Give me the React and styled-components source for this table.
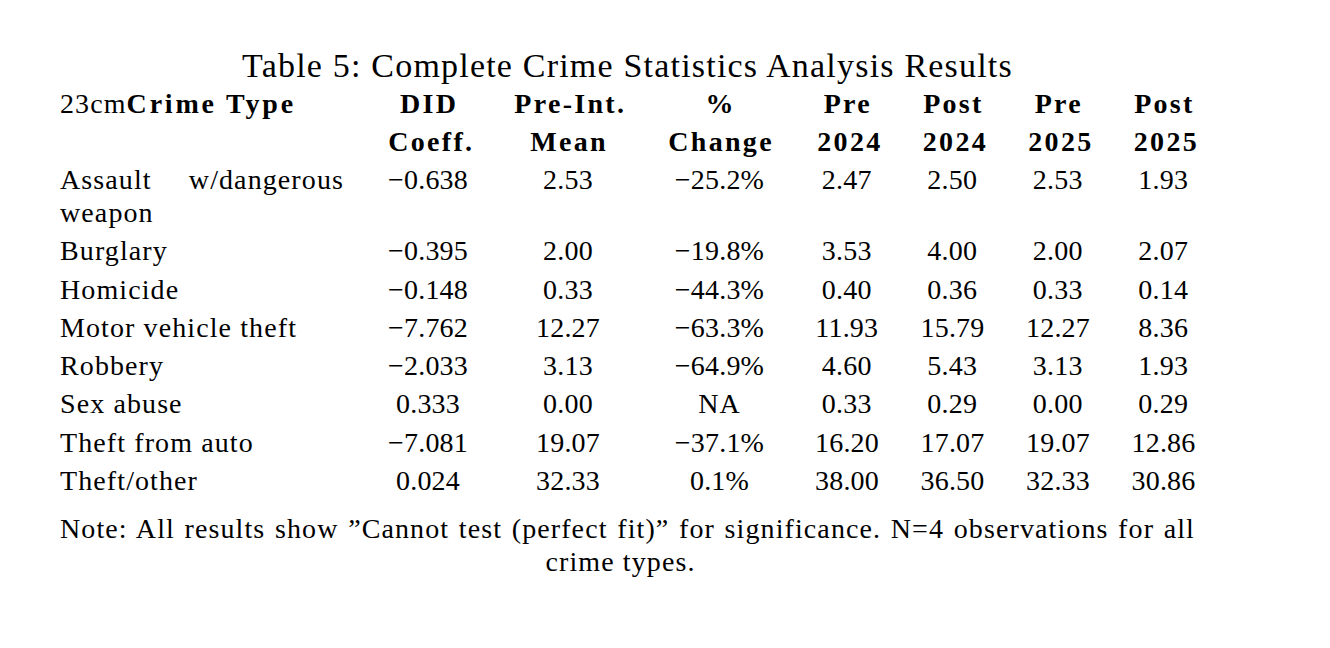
import React from "react";
import styled, { createGlobalStyle } from "styled-components";

const GlobalStyle = createGlobalStyle`
  html, body {
    margin: 0;
    padding: 0;
    background: #ffffff;
  }
  body {
    font-family: "Liberation Serif", "Times New Roman", serif;
    color: #000000;
  }
`;

const Page = styled.div`
  width: 1330px;
  height: 648px;
  box-sizing: border-box;
  padding: 47px 0 0 60px;
  background: #ffffff;
`;

const TableBlock = styled.div`
  width: 1135px;
  display: flex;
  flex-direction: column;
`;

const Caption = styled.div`
  font-size: 34px;
  line-height: 38px;
  letter-spacing: 1.2px;
  text-align: center;
  white-space: nowrap;
`;

const Grid = styled.div`
  display: grid;
  grid-template-columns: 284px 84px 112px 107px repeat(4, 63.5px);
  column-gap: 42px;
  font-size: 28px;
`;

const Row = styled.div`
  display: contents;
`;

const Cell = styled.div`
  padding: 2.9px 0;
  line-height: 32.5px;
  white-space: ${(p) => (p.$wrap ? "normal" : "nowrap")};
  text-align: ${(p) => p.$align || "center"};
  font-weight: ${(p) => (p.$bold ? 700 : 400)};
  letter-spacing: ${(p) => (p.$bold ? "2.3px" : p.$text ? "1.1px" : "0.2px")};
  ${(p) => (p.$bold ? "padding-left: 2.3px;" : "")}
`;

const Bold = styled.span`
  font-weight: 700;
  letter-spacing: 2.8px;
`;

const Note = styled.div`
  margin-top: 12px;
  font-size: 28px;
  line-height: 33px;
  letter-spacing: 1.1px;
`;

const NoteFull = styled.div`
  white-space: nowrap;
  text-align: justify;
  text-align-last: justify;
`;

const NoteCentered = styled.div`
  text-align: center;
  padding-right: 14px;
`;

const headTop = ["DID", "Pre-Int.", "%", "Pre", "Post", "Pre", "Post"];
const headBottom = ["Coeff.", "Mean", "Change", "2024", "2024", "2025", "2025"];

const rows = [
  ["Assault w/dangerous weapon", "−0.638", "2.53", "−25.2%", "2.47", "2.50", "2.53", "1.93"],
  ["Burglary", "−0.395", "2.00", "−19.8%", "3.53", "4.00", "2.00", "2.07"],
  ["Homicide", "−0.148", "0.33", "−44.3%", "0.40", "0.36", "0.33", "0.14"],
  ["Motor vehicle theft", "−7.762", "12.27", "−63.3%", "11.93", "15.79", "12.27", "8.36"],
  ["Robbery", "−2.033", "3.13", "−64.9%", "4.60", "5.43", "3.13", "1.93"],
  ["Sex abuse", "0.333", "0.00", "NA", "0.33", "0.29", "0.00", "0.29"],
  ["Theft from auto", "−7.081", "19.07", "−37.1%", "16.20", "17.07", "19.07", "12.86"],
  ["Theft/other", "0.024", "32.33", "0.1%", "38.00", "36.50", "32.33", "30.86"],
];

export default function App() {
  return (
    <>
      <GlobalStyle />
      <Page>
        <TableBlock>
          <Caption>Table 5: Complete Crime Statistics Analysis Results</Caption>
          <Grid>
            <Row>
              <Cell $align="left" $text>
                23cm<Bold>Crime Type</Bold>
              </Cell>
              {headTop.map((h, i) => (
                <Cell key={i} $bold>
                  {h}
                </Cell>
              ))}
            </Row>
            <Row>
              <Cell $align="left" />
              {headBottom.map((h, i) => (
                <Cell key={i} $bold>
                  {h}
                </Cell>
              ))}
            </Row>
            {rows.map((r) => (
              <Row key={r[0]}>
                <Cell $align="justify" $text $wrap>
                  {r[0]}
                </Cell>
                {r.slice(1).map((v, i) => (
                  <Cell key={i} $text={v === "NA"}>
                    {v}
                  </Cell>
                ))}
              </Row>
            ))}
          </Grid>
          <Note>
            <NoteFull>
              Note: All results show ”Cannot test (perfect fit)” for significance. N=4 observations for all
            </NoteFull>
            <NoteCentered>crime types.</NoteCentered>
          </Note>
        </TableBlock>
      </Page>
    </>
  );
}
